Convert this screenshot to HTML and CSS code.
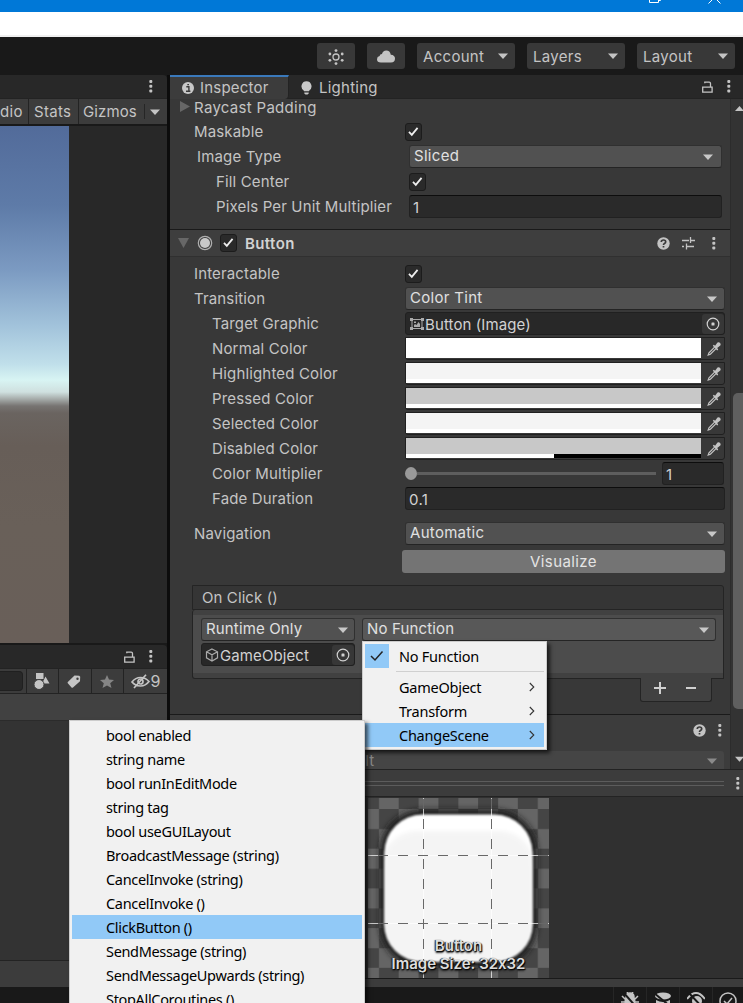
FILE: index.html
```html
<!DOCTYPE html>
<html lang="en">
<head>
<meta charset="utf-8">
<title>Inspector</title>
<link rel="stylesheet" href="styles.css">
</head>
<body>
<svg width="0" height="0" class="defs">
  <symbol id="caret" viewBox="0 0 10 6"><path d="M0 .5h10L5 6z" fill="currentColor"/></symbol>
  <symbol id="dots" viewBox="0 0 4 13"><g fill="currentColor"><rect x=".3" y="0" width="3" height="3" rx="1"/><rect x=".3" y="4.7" width="3" height="3" rx="1"/><rect x=".3" y="9.4" width="3" height="3" rx="1"/></g></symbol>
  <symbol id="lock" viewBox="0 0 11 12"><path d="M.7 6.2h9.4v5H.7zM2.8 2.2v-1h4.400q1.300 0 1.300 1.300V6" fill="none" stroke="currentColor" stroke-width="1.3"/></symbol>
  <symbol id="tick" viewBox="0 0 18 18"><path d="M4.2 9.5l3 3L13.3 5.2" fill="none" stroke="#eee" stroke-width="1.9"/></symbol>
  <symbol id="target" viewBox="0 0 14 14"><circle cx="7" cy="7" r="5.8" fill="none" stroke="currentColor" stroke-width="1.2"/><rect x="5.5" y="5.5" width="3" height="3" rx=".6" fill="currentColor"/></symbol>
  <symbol id="pick" viewBox="0 0 14 14"><path d="M7.6 5.2L2 10.8 1.2 13l2.2-.8 5.6-5.6" fill="none" stroke="currentColor" stroke-width="1.2"/><path d="M5.8 3.8l1-1 1.3 1L10.5.6q1.5-.8 2.6.4 1 1.2.2 2.6L10.2 6l1 1.4-1 1z" fill="currentColor"/></symbol>
  <symbol id="help" viewBox="0 0 13 13"><circle cx="6.5" cy="6.5" r="6.2" fill="currentColor"/><path d="M4.3 5q0-2 2.2-2t2.2 1.8q0 1.100-1.200 1.700-1 .5-1 1.500M6.500 9v1.600" fill="none" stroke="#3a3a3a" stroke-width="1.7"/></symbol>
  <symbol id="chev" viewBox="0 0 6 10"><path d="M.8 1l4 4-4 4" fill="none" stroke="#333" stroke-width="1.1"/></symbol>
</svg>

<header class="titlebar"><svg width="90" height="12" fill="none" stroke="#fff" stroke-width="1"><path d="M9.500 0v2.500h9V0M18.500 .5h2V0"/><path d="M68.500 3.500l6-6 6 6"/></svg></header>
<div class="menubar"></div>
<nav class="toolbar">
  <div class="tool icon"><svg width="18" height="18" viewBox="0 0 18 18"><circle cx="9" cy="9" r="3" fill="none" stroke="#c4c4c4" stroke-width="1.3"/><g fill="#c4c4c4"><circle cx="9" cy="2.600" r="1.400"/><circle cx="9" cy="15.600" r="1.400"/><circle cx="2.900" cy="6" r="1.400"/><circle cx="15.200" cy="6" r="1.400"/><circle cx="2.900" cy="12.300" r="1.400"/><circle cx="15.200" cy="12.300" r="1.400"/></g></svg></div>
  <div class="tool icon"><svg width="18" height="13" viewBox="0 0 18 13"><path d="M4 12.500Q0 12.500 0 9.200 0 6.500 2.600 6 2.800 4 5 4 5.800.4 9.300.4q3.800 0 4.500 4.300Q18 5 18 8.600q0 3.900-4 3.900z" fill="#c4c4c4"/></svg></div>
  <div class="tool">Account<svg width="10" height="6"><use href="#caret"/></svg></div>
  <div class="tool">Layers<svg width="10" height="6"><use href="#caret"/></svg></div>
  <div class="tool">Layout<svg width="10" height="6"><use href="#caret"/></svg></div>
</nav>

<div class="workspace">
  <section class="left">
    <div class="tabs lt"><svg width="4" height="13"><use href="#dots"/></svg></div>
    <div class="gamebar"><span class="c1">dio</span><span class="c2">Stats</span><span class="c3">Gizmos</span><i></i><svg width="10" height="6"><use href="#caret"/></svg></div>
    <div class="game"><div class="sky"></div></div>
    <div class="tabs lt two"><svg class="lk" width="11" height="12"><use href="#lock"/></svg><svg width="4" height="13"><use href="#dots"/></svg></div>
    <div class="searchbar">
      <div class="search"></div>
      <span class="f1"><svg width="16" height="17" viewBox="0 0 16 17"><g fill="#c4c4c4"><path d="M2 0h7.500v6H2zM11.500 3.500l4 7H8z"/><circle cx="5" cy="11.500" r="5" stroke="#3c3c3c"/></g></svg></span>
      <span class="f2"><svg width="14" height="13" viewBox="0 0 14 13"><path fill-rule="evenodd" d="M.8 7L7.500.6l4.700.1 1 1-.2 4.500L6 12.500q-.8.5-1.500 0L.8 8.300Q.3 7.600.8 7zM9.300 3.800a1.200 1.200 0 1 0 2.400 0 1.200 1.200 0 0 0-2.400 0z" fill="#c4c4c4"/></svg></span>
      <span class="f3"><svg width="14" height="13" viewBox="0 0 14 13"><path d="M7 0l2 4.500 5 .5-3.800 3.200 1.300 4.800L7 10.500 2.500 13l1.300-4.800L0 5l5-.5z" fill="#858585"/></svg></span>
      <span class="f4"><svg width="19" height="15" viewBox="0 0 19 15"><g fill="none" stroke="#c4c4c4" stroke-width="1.700"><path d="M1 8q3.500-4.500 8.500-4.500T18 7.500Q14.500 12 9.500 12T1 8zM3 14L15 .8"/><circle cx="9.500" cy="7.500" r="2.500"/></g></svg>9</span>
    </div>
    <div class="pathrow"></div>
    <div class="assets"></div>
    <div class="assetfoot"></div>
  </section>

  <section class="right">
    <div class="tabs it">
      <div class="tab on"><svg width="12" height="12" viewBox="0 0 12 12"><circle cx="6" cy="6" r="6" fill="#c8c8c8"/><path d="M4.300 4.800h2.600V9M4 9.200h4.400M5.300 2.600h1.700" stroke="#3a3a3a" stroke-width="1.400" fill="none"/></svg>Inspector</div>
      <div class="tab"><svg width="11" height="14" viewBox="0 0 11 14"><path d="M5.500.3a5 5 0 0 1 3 9L8 10.300H3l-.5-1a5 5 0 0 1 3-9zM3.300 11.500h4.400v1L6.500 13.500h-2l-1.200-1z" fill="#c8c8c8"/></svg>Lighting</div>
      <svg class="lk" width="11" height="12"><use href="#lock"/></svg><svg class="dt" width="4" height="13"><use href="#dots"/></svg>
    </div>
    <div class="scroll">
      <div class="content">
        <div class="row first"><svg class="fold" width="10" height="11"><path d="M0 0l10 5.500L0 11z" fill="#676767"/></svg>Raycast Padding</div>
        <div class="row"><label>Maskable</label><div class="check"><svg><use href="#tick"/></svg></div></div>
        <div class="row in0"><label>Image Type</label><div class="drop"><span>Sliced</span><svg width="10" height="6"><use href="#caret"/></svg></div></div>
        <div class="row in1"><label>Fill Center</label><div class="check"><svg><use href="#tick"/></svg></div></div>
        <div class="row in1"><label>Pixels Per Unit Multiplier</label><div class="field">1</div></div>
        <div class="comp">
          <svg width="11" height="10"><path d="M0 0h11L5.500 10z" fill="#676767"/></svg>
          <svg class="rad" width="16" height="16" viewBox="0 0 16 16"><circle cx="8" cy="8" r="6.700" fill="none" stroke="#b0b0b0" stroke-width="1.200"/><circle cx="8" cy="8" r="5" fill="#c8c8c8"/></svg>
          <div class="check"><svg><use href="#tick"/></svg></div>
          <b>Button</b>
          <svg width="13" height="13"><use href="#help"/></svg>
          <svg class="sl" width="13" height="13" viewBox="0 0 13 13"><path d="M0 3.500h7M9 3.500h4M8.500 0v6M0 9.500h2M4.500 9.500H12M4.500 6.500v6" fill="none" stroke="#c4c4c4" stroke-width="1.300"/></svg>
          <svg width="4" height="13"><use href="#dots"/></svg>
        </div>
        <div class="row"><label>Interactable</label><div class="check"><svg><use href="#tick"/></svg></div></div>
        <div class="row"><label>Transition</label><div class="drop"><span>Color Tint</span><svg width="10" height="6"><use href="#caret"/></svg></div></div>
        <div class="row in2"><label>Target Graphic</label><div class="object"><svg width="14" height="12" viewBox="0 0 14 12"><path d="M2 1.500h10v9H2z" fill="none" stroke="#aaa"/><path d="M0 0h3v3H0zM11 0h3v3h-3zM0 9h3v3H0zM11 9h3v3h-3zM4 9V7l1-1 1.500 1 2-3L10 6v3zM4 3.500h2v1.500H4z" fill="#aaa"/></svg><span>Button (Image)</span><em><svg width="14" height="14"><use href="#target"/></svg></em></div></div>
        <div class="row in2"><label>Normal Color</label><div class="color"><div class="sw w"></div><svg width="14" height="14"><use href="#pick"/></svg></div></div>
        <div class="row in2"><label>Highlighted Color</label><div class="color"><div class="sw l"></div><svg width="14" height="14"><use href="#pick"/></svg></div></div>
        <div class="row in2"><label>Pressed Color</label><div class="color"><div class="sw g"></div><svg width="14" height="14"><use href="#pick"/></svg></div></div>
        <div class="row in2"><label>Selected Color</label><div class="color"><div class="sw l"></div><svg width="14" height="14"><use href="#pick"/></svg></div></div>
        <div class="row in2"><label>Disabled Color</label><div class="color"><div class="sw g half"></div><svg width="14" height="14"><use href="#pick"/></svg></div></div>
        <div class="row in2"><label>Color Multiplier</label><div class="slider"><i></i><u></u></div><div class="field num">1</div></div>
        <div class="row in2"><label>Fade Duration</label><div class="field">0.1</div></div>
        <div class="row nav"><label>Navigation</label><div class="drop"><span>Automatic</span><svg width="10" height="6"><use href="#caret"/></svg></div></div>
        <button class="visualize">Visualize</button>
        <div class="event">
          <div class="evhead">On Click ()</div>
          <div class="evbody"><div class="evitem">
            <div class="evcol"><div class="drop"><span>Runtime Only</span><svg width="10" height="6"><use href="#caret"/></svg></div>
            <div class="object"><svg width="14" height="14" viewBox="0 0 14 14"><path d="M7 1l5.500 2.800v6L7 13l-5.500-3.200v-6zM1.500 3.800L7 6.800l5.500-3M7 6.800V13" fill="none" stroke="#aaa" stroke-width="1.200"/></svg><span>GameObject</span><em><svg width="14" height="14"><use href="#target"/></svg></em></div></div>
            <div class="drop fn"><span>No Function</span><svg width="10" height="6"><use href="#caret"/></svg></div>
          </div></div>
          <div class="evfoot"><svg width="70" height="24"><path d="M13 10h12M19 4v12M45 10h10" stroke="#d0d0d0" stroke-width="2"/></svg></div>
        </div>
        <div class="material">
          <div class="mhead"><svg width="13" height="13"><use href="#help"/></svg><svg width="4" height="13"><use href="#dots"/></svg></div>
          <div class="shader"><span>UI/Default</span><svg width="10" height="6"><use href="#caret"/></svg></div>
        </div>
      </div>
      <div class="vbar"><svg class="up" width="9" height="5"><path d="M0 5L4.500 0 9 5z" fill="#c4c4c4"/></svg><div class="thumb"></div><svg class="dn" width="9" height="6"><use href="#caret"/></svg></div>
    </div>
    <div class="pvhead"><div class="grip"></div><svg width="4" height="13"><use href="#dots"/></svg></div>
    <div class="preview">
      <div class="sprite">
        <svg width="181" height="180">
          <defs><pattern id="chk" width="39.700" height="39.700" patternUnits="userSpaceOnUse" x="-9" y="11"><rect width="40" height="40" fill="#454545"/><path d="M0 0h20v20H0zM20 20h20v20H20z" fill="#656565"/></pattern>
          <filter id="b" x="-20%" y="-20%" width="140%" height="140%"><feGaussianBlur stdDeviation="3"/></filter><filter id="s"><feGaussianBlur stdDeviation="1.100"/></filter><filter id="i"><feGaussianBlur stdDeviation="2"/></filter>
          <clipPath id="cp"><rect x="16" y="16" width="149" height="148" rx="38"/></clipPath></defs>
          <rect width="181" height="180" fill="url(#chk)"/>
          <rect x="12" y="12" width="157" height="157" rx="42" fill="#1c1c1c" filter="url(#b)"/>
          <g filter="url(#s)"><rect x="16.500" y="16.500" width="148" height="147" rx="38" fill="#fff"/><g clip-path="url(#cp)"><rect x="14" y="33" width="152" height="150" rx="35" fill="#f4f4f4" filter="url(#i)"/></g></g>
          <g fill="none"><path d="M0 57.500h181M0 125.500h181M55.500 0v180M123.500 0v180" stroke="#fff" stroke-opacity=".7"/><path d="M10 57.500h171M10 125.500h171M55.500 1v179M123.500 1v179" stroke="#686868" stroke-dasharray="10 10"/></g>
        </svg>
        <div class="caption">Button<br>Image Size: 32x32</div>
      </div>
    </div>
    <div class="pvfoot"></div>
  </section>
</div>
<footer class="status">
  <span><svg width="18" height="18" viewBox="0 0 18 18"><path d="M5 5q0-4 4-4t4 4v1q2 5-1 9H6Q3 11 5 6zM1 4l3 3M17 4l-3 3M0 10h4M14 10h4M6 0l1.500 2M12 0l-1.500 2" fill="#c4c4c4" stroke="#c4c4c4" stroke-width="1.500"/><path d="M2 0l15 17" stroke="#191919" stroke-width="2"/></svg></span>
  <span><svg width="18" height="18" viewBox="0 0 18 18"><ellipse cx="9" cy="4" rx="8" ry="3.500" fill="#c4c4c4"/><path d="M2 8q7 4 14 0v8H2z" fill="#c4c4c4"/><path d="M0 1l17 14" stroke="#191919" stroke-width="2"/></svg></span>
  <span><svg width="18" height="18" viewBox="0 0 18 18"><path d="M0 7q9-12 18 0" fill="none" stroke="#c4c4c4" stroke-width="2"/><circle cx="10" cy="9" r="5" fill="#c4c4c4"/><path d="M1 0l16 17" stroke="#191919" stroke-width="2"/></svg></span>
  <span><svg width="18" height="18" viewBox="0 0 18 18"><circle cx="9" cy="9" r="8" fill="none" stroke="#c4c4c4" stroke-width="1.500"/><path d="M5 9l3 3 5-6" fill="none" stroke="#c4c4c4" stroke-width="1.500"/></svg></span>
</footer>

<div class="menu funcs">
  <div class="sel0"><span class="ck"><svg width="14" height="12" viewBox="0 0 14 12"><path d="M1 6l4 4L12.500 1.500" fill="none" stroke="#222" stroke-width="1.500"/></svg></span>No Function</div>
  <hr>
  <div>GameObject<svg width="6" height="10"><use href="#chev"/></svg></div>
  <div>Transform<svg width="6" height="10"><use href="#chev"/></svg></div>
  <div class="hot">ChangeScene<svg width="6" height="10"><use href="#chev"/></svg></div>
</div>
<div class="menu methods">
  <div>bool enabled</div><div>string name</div><div>bool runInEditMode</div><div>string tag</div><div>bool useGUILayout</div>
  <div>BroadcastMessage (string)</div><div>CancelInvoke (string)</div><div>CancelInvoke ()</div><div class="hot">ClickButton ()</div>
  <div>SendMessage (string)</div><div>SendMessageUpwards (string)</div><div>StopAllCoroutines ()</div>
</div>
</body>
</html>
```
FILE: styles.css
```css
* { box-sizing: border-box; }
html, body { margin: 0; }
body { width: 743px; height: 1003px; overflow: hidden; position: relative; display: flex; flex-direction: column; background: #191919; color: #c4c4c4; font: 15px/20px Inter, sans-serif; font-feature-settings: "calt" 0; letter-spacing: .3px; white-space: nowrap; }
svg { display: block; flex: none; }
.defs { position: absolute; }
.titlebar { height: 12px; flex: none; background: #0078d7; display: flex; justify-content: flex-end; }
.titlebar svg { margin-right: 13px; }
.menubar { height: 25px; flex: none; background: #fff; border-bottom: 2px solid #f0f0f0; }
.toolbar { height: 38px; flex: none; display: flex; justify-content: flex-end; gap: 12px; padding: 6px 8px; }
.tool { width: 98px; height: 26px; border-radius: 3px; background: #383838; display: flex; align-items: center; justify-content: space-between; padding: 2px 7px 0 6px; }
.tool svg { margin-top: -3px; }
.tool.icon { width: 38px; justify-content: center; padding: 1px 0 0; }
.tool.icon svg { margin: 0; }

.workspace { height: 912px; flex: none; display: flex; }
.left { width: 167px; display: flex; flex-direction: column; flex: none; overflow: hidden; }
.right { width: 576px; border-left: 3px solid #0c0c0c; display: flex; flex-direction: column; flex: none; background: #383838; }
.tabs { flex: none; height: 24px; background: #282828; display: flex; align-items: center; border-bottom: 1px solid #232323; }
.lt { justify-content: flex-end; padding-right: 14px; border-radius: 0 4px 0 0; }
.lt .lk { margin-right: 14px; }
.gamebar { height: 25px; flex: none; background: #3c3c3c; display: flex; align-items: center; line-height: 25px; margin-bottom: 2px; }
.c1 { width: 29px; border-right: 1px solid #232323; }
.c2 { width: 50px; border-right: 1px solid #232323; padding-left: 5px; }
.c3 { width: 65px; padding-left: 4px; letter-spacing: .1px; }
.gamebar i { width: 1px; height: 15px; background: #262626; margin-right: 5px; }
.game { height: 517px; flex: none; background: #282828; }
.sky { width: 69px; height: 517px; background: linear-gradient(#526b9a 0, #5e7ba8 80px, #7c9bc2 145px, #a2c3db 200px, #c0dfea 238px, #d8f4f3 254px, #cfe0df 266px, #a6acaa 273px, #777472 280px, #6a6460 287px, #675e58 320px, #696059 400px, #695f59 517px); }
.two { margin-top: 2px; }
.searchbar { height: 25px; flex: none; background: #3c3c3c; display: flex; border-bottom: 1px solid #232323; }
.searchbar > * { border-right: 1px solid #232323; display: flex; align-items: center; justify-content: center; }
.search { width: 23px; height: 20px; margin: 2px 3px 0 0; background: #282828; border: 1px solid #202020; border-left: 0; border-radius: 0 4px 4px 0; }
.f1 { width: 33px; border-left: 1px solid #232323; padding-right: 2px; }
.f2 { width: 33px; padding-right: 2px; }
.f3 { width: 32px; padding-right: 1px; }
.f4 { flex: 1; border-right: 0 !important; font-size: 16px; gap: 1px; letter-spacing: 0; }
.pathrow { height: 27px; flex: none; background: #414141; border-bottom: 1px solid #2b2b2b; }
.assets { flex: 1; background: #333; }
.assetfoot { height: 27px; flex: none; background: #3c3c3c; border-top: 1px solid #232323; }

.tab { height: 24px; display: flex; align-items: center; gap: 7px; padding: 3px 0 0 12px; letter-spacing: .25px; }
.tab.on { width: 119px; background: #3c3c3c; border-top: 2px solid #3a79bb; padding-top: 1px; border-radius: 0 0 4px 0; border-right: 1px solid #232323; gap: 6px; letter-spacing: .2px; }
.it .lk { margin-left: auto; margin-right: 14px; }
.it .dt { margin-right: 12px; margin-top: -1px; }
.scroll { height: 670px; flex: none; display: flex; }
.content { width: 560px; height: 670px; overflow: hidden; flex: none; }
.row { height: 25px; display: flex; align-items: center; padding-left: 24px; }
.row label { width: 211px; padding-top: 1px; flex: none; letter-spacing: .15px; }
.first { height: 20px; padding: 0 0 2px 10px; gap: 4px; }
.first svg { margin-top: -3px; }
.in0 { padding-left: 27px; } .in0 label { width: 212px; }
.in1 { padding-left: 46px; } .in1 label { width: 193px; }
.in2 { padding-left: 42px; } .in2 label { width: 193px; }
.in0 .drop, .in1 .field { width: 313px; }
.check { width: 17px; height: 18px; border: 1px solid #1c1c1c; border-radius: 3px; background: #2a2a2a; flex: none; margin-top: 1px; }
.check svg { width: 17px; height: 17px; margin: -1px; }
.drop { width: 319px; height: 23px; border: 1px solid #303030; border-bottom-color: #242424; border-radius: 3px; background: #515151; color: #e0e0e0; display: flex; align-items: center; justify-content: space-between; padding: 0 6px 0 4px; flex: none; }
.row .drop { padding-right: 7px; }
.in0 .drop svg { margin-right: 1px; }
.nav .drop, .row .drop { width: 320px; }
.row.in0 .drop { width: 313px; }
.drop span { margin-top: -2px; }
.drop svg { color: #c8c8c8; }
.field { width: 320px; height: 23px; border: 1px solid #212121; border-top-color: #0d0d0d; border-radius: 3px; background: #2a2a2a; color: #d2d2d2; padding: 2px 3px; line-height: 20px; }
.object { width: 320px; height: 23px; border: 1px solid #202020; border-radius: 3px; background: #282828; color: #d2d2d2; display: flex; align-items: center; padding-left: 4px; }
.object span { margin: 2px 0 0 1px; letter-spacing: .1px; }
.object em { width: 22px; height: 20px; border-radius: 3px; background: #373737; margin: 0 0 0 auto; display: grid; place-items: center; }
.color { width: 320px; height: 23px; border: 1px solid #202020; border-radius: 0 0 3px 3px; display: flex; align-items: center; gap: 6px; }
.sw { width: 295px; height: 20px; margin-top: -1px; border-bottom: 4px solid #fff; flex: none; }
.w { background: #fff; } .l { background: #f4f4f4; } .g { background: #c8c8c8; }
.half { border-bottom: 0; background: linear-gradient(90deg, #fff 148px, #000 148px) bottom/100% 4px no-repeat #c8c8c8; }
.slider { width: 252px; height: 13px; display: flex; align-items: center; margin-right: 5px; }
.slider i { width: 12px; height: 13px; border-radius: 50%; background: #999; }
.slider u { width: 239px; height: 3px; background: #5e5e5e; }
.field.num { width: 62px; }
.comp { height: 28px; margin: 10px 0 4px; border-top: 1px solid #1a1a1a; border-bottom: 1px solid #303030; background: #3e3e3e; display: flex; align-items: center; padding: 0 14px 0 8px; }
.rad { margin: 0 7px 0 8px; }
.comp .check { margin-top: 0; }
.comp b { margin: 2px 0 0 8px; font-weight: 600; color: #d2d2d2; flex: 1; letter-spacing: .4px; }
.sl { margin: 0 17px 0 12px; }
.nav { margin-top: 10px; }
.visualize { display: block; width: 323px; height: 23px; margin: 4px 0 0 232px; padding: 0; border: 0; border-radius: 3px; background: #747474; color: #e4e4e4; font: inherit; letter-spacing: .4px; line-height: 21px; }
.event { margin: 12px 6px 0 22px; }
.evhead { height: 25px; border: 1px solid #242424; background: #353535; padding: 2px 9px; border-radius: 0 3px 0 0; letter-spacing: .1px; }
.evbody { height: 69px; border: 1px solid #242424; border-top: 0; border-radius: 3px 0 0 3px; background: #414141; padding: 5px 0; }
.evitem { height: 58px; background: #4c4c4c; display: flex; gap: 7px; padding: 3px 8px; letter-spacing: .15px; }
.evcol .drop, .evcol .object { width: 154px; }
.evcol .object { margin-top: 2px; padding-left: 3px; }
.fn { width: 354px; background: #585858; }
.evfoot { width: 72px; height: 24px; margin: -1px 12px 0 auto; border: 1px solid #242424; border-top: 0; border-radius: 0 0 3px 3px; background: #414141; }
.material { margin-top: 12px; border-top: 1px solid #1a1a1a; background: #3c3c3c; height: 58px; }
.mhead { height: 36px; display: flex; justify-content: flex-end; align-items: center; gap: 12px; padding: 0 8px 6px 0; }
.shader { height: 24px; width: 428px; margin-left: 126px; background: #454545; border-radius: 3px; color: #8a8a8a; display: flex; justify-content: space-between; align-items: center; padding: 0 7px 4px 4px; }
.vbar { width: 13px; background: #333; border-left: 1px solid #2c2c2c; display: flex; flex-direction: column; overflow: hidden; }
.up { margin: 7px 0 0 4px; }
.thumb { margin: 282px 0 0 2px; width: 14px; height: 316px; border-radius: 5px; background: #5f5f5f; flex: none; }
.dn { margin: 47px 0 0 4px; }
.pvhead { height: 28px; flex: none; border: solid #232323; border-width: 1px 0; display: flex; align-items: center; background: #3c3c3c; }
.grip { width: 554px; height: 5px; border: solid #5c5c5c; border-width: 1px 0; }
.pvhead svg { margin-left: 12px; }
.preview { flex: 1; background: #303030; padding: 1px 0 0 198px; }
.sprite { width: 181px; height: 180px; position: relative; }
.caption { position: absolute; inset: auto 0 5px 0; text-align: center; font-weight: 600; line-height: 18px; font-size: 15px; letter-spacing: 0; color: #ddd; text-shadow: 1px 1px 1px #000, -1px 0 1px #222, 0 2px 2px #222; }
.pvfoot { height: 9px; flex: none; border-top: 1px solid #1a1a1a; background: #3c3c3c; }
.status { height: 16px; flex: none; display: flex; justify-content: flex-end; overflow: hidden; }
.status span { width: 33px; height: 16px; border-left: 1px solid #262626; padding: 5px 0 0 7px; flex: none; }
.status span:last-child { width: 31px; padding-left: 6px; }

.menu { position: absolute; background: #f1f1f1; border: 1px solid #ccc; padding: 2px; color: #000; font: 14.5px/24px "Noto Sans", sans-serif; letter-spacing: -.33px; box-shadow: 3px 3px 4px rgba(0,0,0,.65); }
.menu div { height: 24px; padding-left: 34px; display: flex; align-items: center; }
.menu .hot { background: #91c9f7; }
.funcs { left: 362px; top: 641px; width: 185px; height: 109px; letter-spacing: -.25px; }
.funcs svg { margin: -1px 9px 0 auto; }
.menu .sel0 { padding-left: 0; }
.ck { width: 24px; height: 24px; background: #91c9f7; margin-right: 10px; display: grid; place-items: center; }
.ck svg { margin: 0; }
.menu hr { border: 0; border-top: 1px solid #d0d0d0; height: 1px; margin: 3px 0 3px 31px; }
.methods { left: 69px; top: 720px; width: 296px; height: 300px; }
```
